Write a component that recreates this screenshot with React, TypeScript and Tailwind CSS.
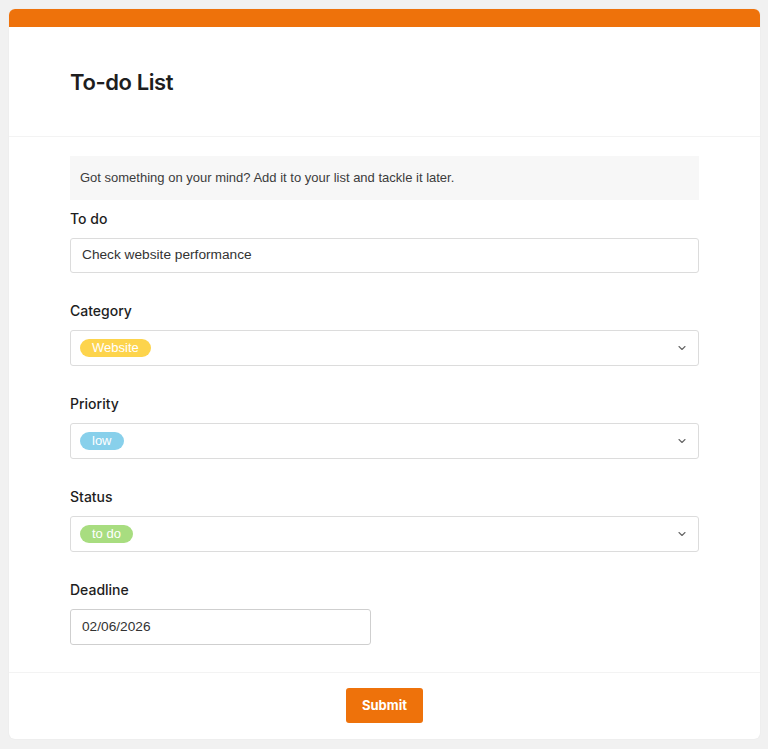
import { ChevronDown } from "lucide-react"

const sans = "font-['Inter','Liberation_Sans',sans-serif]"
const helv = "font-['Liberation_Sans','Helvetica',sans-serif]"

function Label({ children }: { children: string }) {
  return <div className={`${sans} text-[14px] leading-[20px] font-medium text-[#1e1e1e] mb-[9px]`}>{children}</div>
}

function SelectBox({ tag, color }: { tag: string; color: string }) {
  return (
    <div className="h-[36px] w-full border border-[#dcdcdc] rounded-[3px] bg-white flex items-center justify-between pl-[9px] pr-[10px]">
      <span className={`${helv} ${color} text-white text-[13px] leading-[18px] h-[18px] px-[12px] rounded-full`}>{tag}</span>
      <ChevronDown className="w-[12px] h-[12px] text-[#666]" strokeWidth={2.2} />
    </div>
  )
}

export default function App() {
  return (
    <div className="min-h-screen bg-[#f1f1f1] p-[9px] pr-[8px]">
      <div className="bg-white rounded-[6px] overflow-hidden shadow-[0_0_2px_rgba(0,0,0,0.06)]">
        <div className="h-[18px] bg-[#ee720b]" />
        <div className="h-[110px] border-b border-[#f3f3f3] flex items-center px-[61px]">
          <h1 className={`${sans} text-[22px] font-semibold text-[#1e1e1e] tracking-[-0.4px] pt-[1px]`}>To-do List</h1>
        </div>
        <div className="pt-[19px] pb-[27px] px-[61px] pr-[61px]">
          <div className={`${helv} bg-[#f7f7f7] h-[44px] flex items-center px-[10px] text-[13px] text-[#3c3c3c] mb-[9px]`}>
            Got something on your mind? Add it to your list and tackle it later.
          </div>
          <Label>To do</Label>
          <div className={`${helv} h-[35px] border border-[#dcdcdc] rounded-[3px] flex items-center px-[11px] text-[13.7px] text-[#333]`}>
            Check website performance
          </div>
          <div className="mt-[28px]">
            <Label>Category</Label>
            <SelectBox tag="Website" color="bg-[#fdd44c]" />
          </div>
          <div className="mt-[28px]">
            <Label>Priority</Label>
            <SelectBox tag="low" color="bg-[#88d0eb]" />
          </div>
          <div className="mt-[28px]">
            <Label>Status</Label>
            <SelectBox tag="to do" color="bg-[#a8dd80]" />
          </div>
          <div className="mt-[28px]">
            <Label>Deadline</Label>
            <div className={`${helv} w-[301px] h-[36px] border border-[#cfcfcf] rounded-[3px] flex items-center px-[11px] text-[13.7px] text-[#333]`}>
              02/06/2026
            </div>
          </div>
        </div>
        <div className="border-t border-[#f3f3f3] flex justify-center pt-[15px] pb-[16px]">
          <button className={`${sans} w-[77px] h-[35px] bg-[#ee720b] text-white text-[13px] font-bold rounded-[3px]`}>
            Submit
          </button>
        </div>
      </div>
    </div>
  )
}
